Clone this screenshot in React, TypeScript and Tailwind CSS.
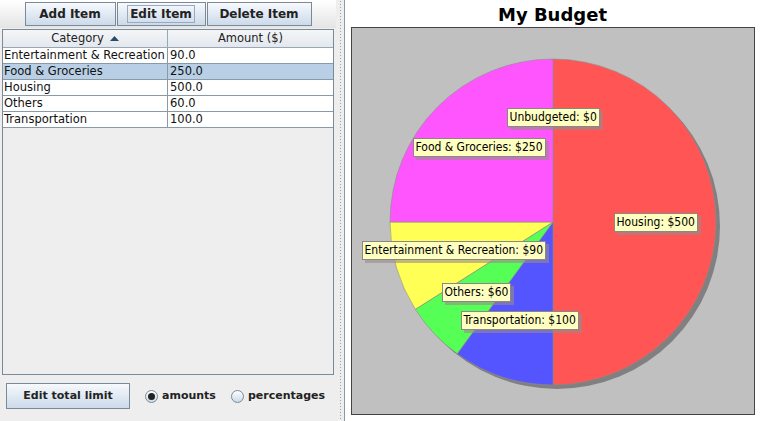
const items = [
  { name: "Entertainment & Recreation", amount: "90.0" },
  { name: "Food & Groceries", amount: "250.0" },
  { name: "Housing", amount: "500.0" },
  { name: "Others", amount: "60.0" },
  { name: "Transportation", amount: "100.0" },
];

// slices clockwise from 12 o'clock, degrees
const slices = [
  { from: 0, to: 180, color: "#ff5555" },
  { from: 180, to: 216, color: "#5555ff" },
  { from: 216, to: 237.6, color: "#55ff55" },
  { from: 237.6, to: 270, color: "#ffff55" },
  { from: 270, to: 360, color: "#ff55ff" },
];

const labels = [
  { text: "Unbudgeted: $0", left: 155, top: 80 },
  { text: "Food & Groceries: $250", left: 61, top: 110 },
  { text: "Housing: $500", left: 262, top: 185 },
  { text: "Entertainment & Recreation: $90", left: 10, top: 213 },
  { text: "Others: $60", left: 90, top: 255 },
  { text: "Transportation: $100", left: 109, top: 283 },
];

const CX = 201;
const CY = 194;
const R = 163;

const pt = (deg: number) => {
  const a = (deg * Math.PI) / 180;
  return [CX + R * Math.sin(a), CY - R * Math.cos(a)];
};

const slicePath = (from: number, to: number) => {
  const [x1, y1] = pt(from);
  const [x2, y2] = pt(to);
  const large = to - from > 180 ? 1 : 0;
  return `M ${CX} ${CY} L ${x1} ${y1} A ${R} ${R} 0 ${large} 1 ${x2} ${y2} Z`;
};

const font = { fontFamily: '"DejaVu Sans", Verdana, sans-serif' };

const MetalButton = ({ label, width, focused }: { label: string; width: string; focused?: boolean }) => (
  <button
    className={`${width} h-[24px] flex items-center justify-center border border-[#7a8a99] bg-gradient-to-b from-[#f7f9fc] to-[#ccdaea] text-[12px] font-bold text-[#222]`}
  >
    {focused ? (
      <span className="border border-[#99aabf] px-[2px] leading-[16px]">{label}</span>
    ) : (
      label
    )}
  </button>
);

const Radio = ({ label, checked }: { label: string; checked?: boolean }) => (
  <label className="flex items-center gap-[4px] text-[11px] font-bold text-[#222]">
    <span className="w-[13px] h-[13px] rounded-full border border-[#7a8a99] bg-gradient-to-b from-[#ffffff] to-[#cbd9e8] flex items-center justify-center">
      {checked && <span className="w-[7px] h-[7px] rounded-full bg-[#222]" />}
    </span>
    {label}
  </label>
);

export default function App() {
  return (
    <div className="w-[760px] h-[421px] flex overflow-hidden bg-white" style={font}>
      {/* left panel */}
      <div className="w-[336px] h-full flex flex-col bg-[#eeeeee]">
        <div className="h-[28px] pt-[2px] flex justify-center gap-[1px] bg-gradient-to-b from-white to-[#e4e4e4]">
          <MetalButton label="Add Item" width="w-[91px]" />
          <MetalButton label="Edit Item" width="w-[89px]" focused />
          <MetalButton label="Delete Item" width="w-[105px]" />
        </div>

        <div className="mt-[1px] ml-[2px] w-[332px] h-[346px] border border-[#7a8a99] bg-[#eeeeee] flex flex-col">
          <div className="h-[18px] flex border-b border-[#9aa8b5] bg-gradient-to-b from-[#f4f6f8] to-[#e3e8ee] text-[11.5px] text-[#222]">
            <div className="w-[165px] border-r border-[#9aa8b5] flex items-center justify-center gap-[6px]">
              Category
              <svg width="9" height="5" viewBox="0 0 9 5">
                <path d="M0 5 L4.5 0 L9 5 Z" fill="#2b4b6b" />
              </svg>
            </div>
            <div className="flex-1 flex items-center justify-center">Amount ($)</div>
          </div>
          {items.map((it, i) => (
            <div
              key={it.name}
              className={`h-[16px] flex border-b border-[#8a99a6] text-[11.5px] leading-[15px] text-[#111] ${i === 1 ? "bg-[#b8cfe5]" : "bg-white"}`}
            >
              <div className="w-[165px] border-r border-[#8a99a6] pl-[1px] whitespace-nowrap overflow-hidden">{it.name}</div>
              <div className="flex-1 pl-[2px]">{it.amount}</div>
            </div>
          ))}
        </div>

        <div className="flex items-center pl-[6px] pt-[8px] gap-[15px]">
          <button className="w-[124px] h-[26px] border border-[#7a8a99] bg-gradient-to-b from-[#f7f9fc] to-[#ccdaea] text-[11px] font-bold text-[#222]">
            Edit total limit
          </button>
          <Radio label="amounts" checked />
          <Radio label="percentages" />
        </div>
      </div>

      {/* split divider */}
      <div className="w-[9px] h-full bg-[#eeeeee] border-r border-[#8a99a6] flex justify-center">
        <div className="w-[3px] h-full bg-[radial-gradient(circle,#9aa0a8_0.6px,transparent_0.9px)] bg-[length:3px_3px]" />
      </div>

      {/* chart panel */}
      <div className="flex-1 h-full flex flex-col items-center bg-white">
        <div className="h-[27px] flex items-center text-[18px] font-bold text-black pt-[1px]">My Budget</div>
        <div className="relative w-[404px] h-[388px] border border-[#444] bg-[#c0c0c0]">
          <svg width="402" height="386" className="absolute left-0 top-0">
            <circle cx={CX + 4} cy={CY + 4} r={R} fill="#808080" />
            {slices.map((s) => (
              <path key={s.color} d={slicePath(s.from, s.to)} fill={s.color} stroke="#8a8a8a" strokeWidth="0.6" />
            ))}
          </svg>
          {labels.map((l) => (
            <div key={l.text} className="absolute" style={{ left: l.left, top: l.top }}>
              <div className="relative">
                <div className="absolute left-[3px] top-[3px] w-full h-full bg-[#9a8a8a] opacity-60" />
                <div className="relative h-[19px] px-[2px] border border-[#888] bg-[#ffffc0] text-[12px] leading-[17px] text-black whitespace-nowrap" style={{ fontFamily: '"DejaVu Sans Condensed", "DejaVu Sans", sans-serif' }}>
                  {l.text}
                </div>
              </div>
            </div>
          ))}
        </div>
      </div>
    </div>
  );
}
